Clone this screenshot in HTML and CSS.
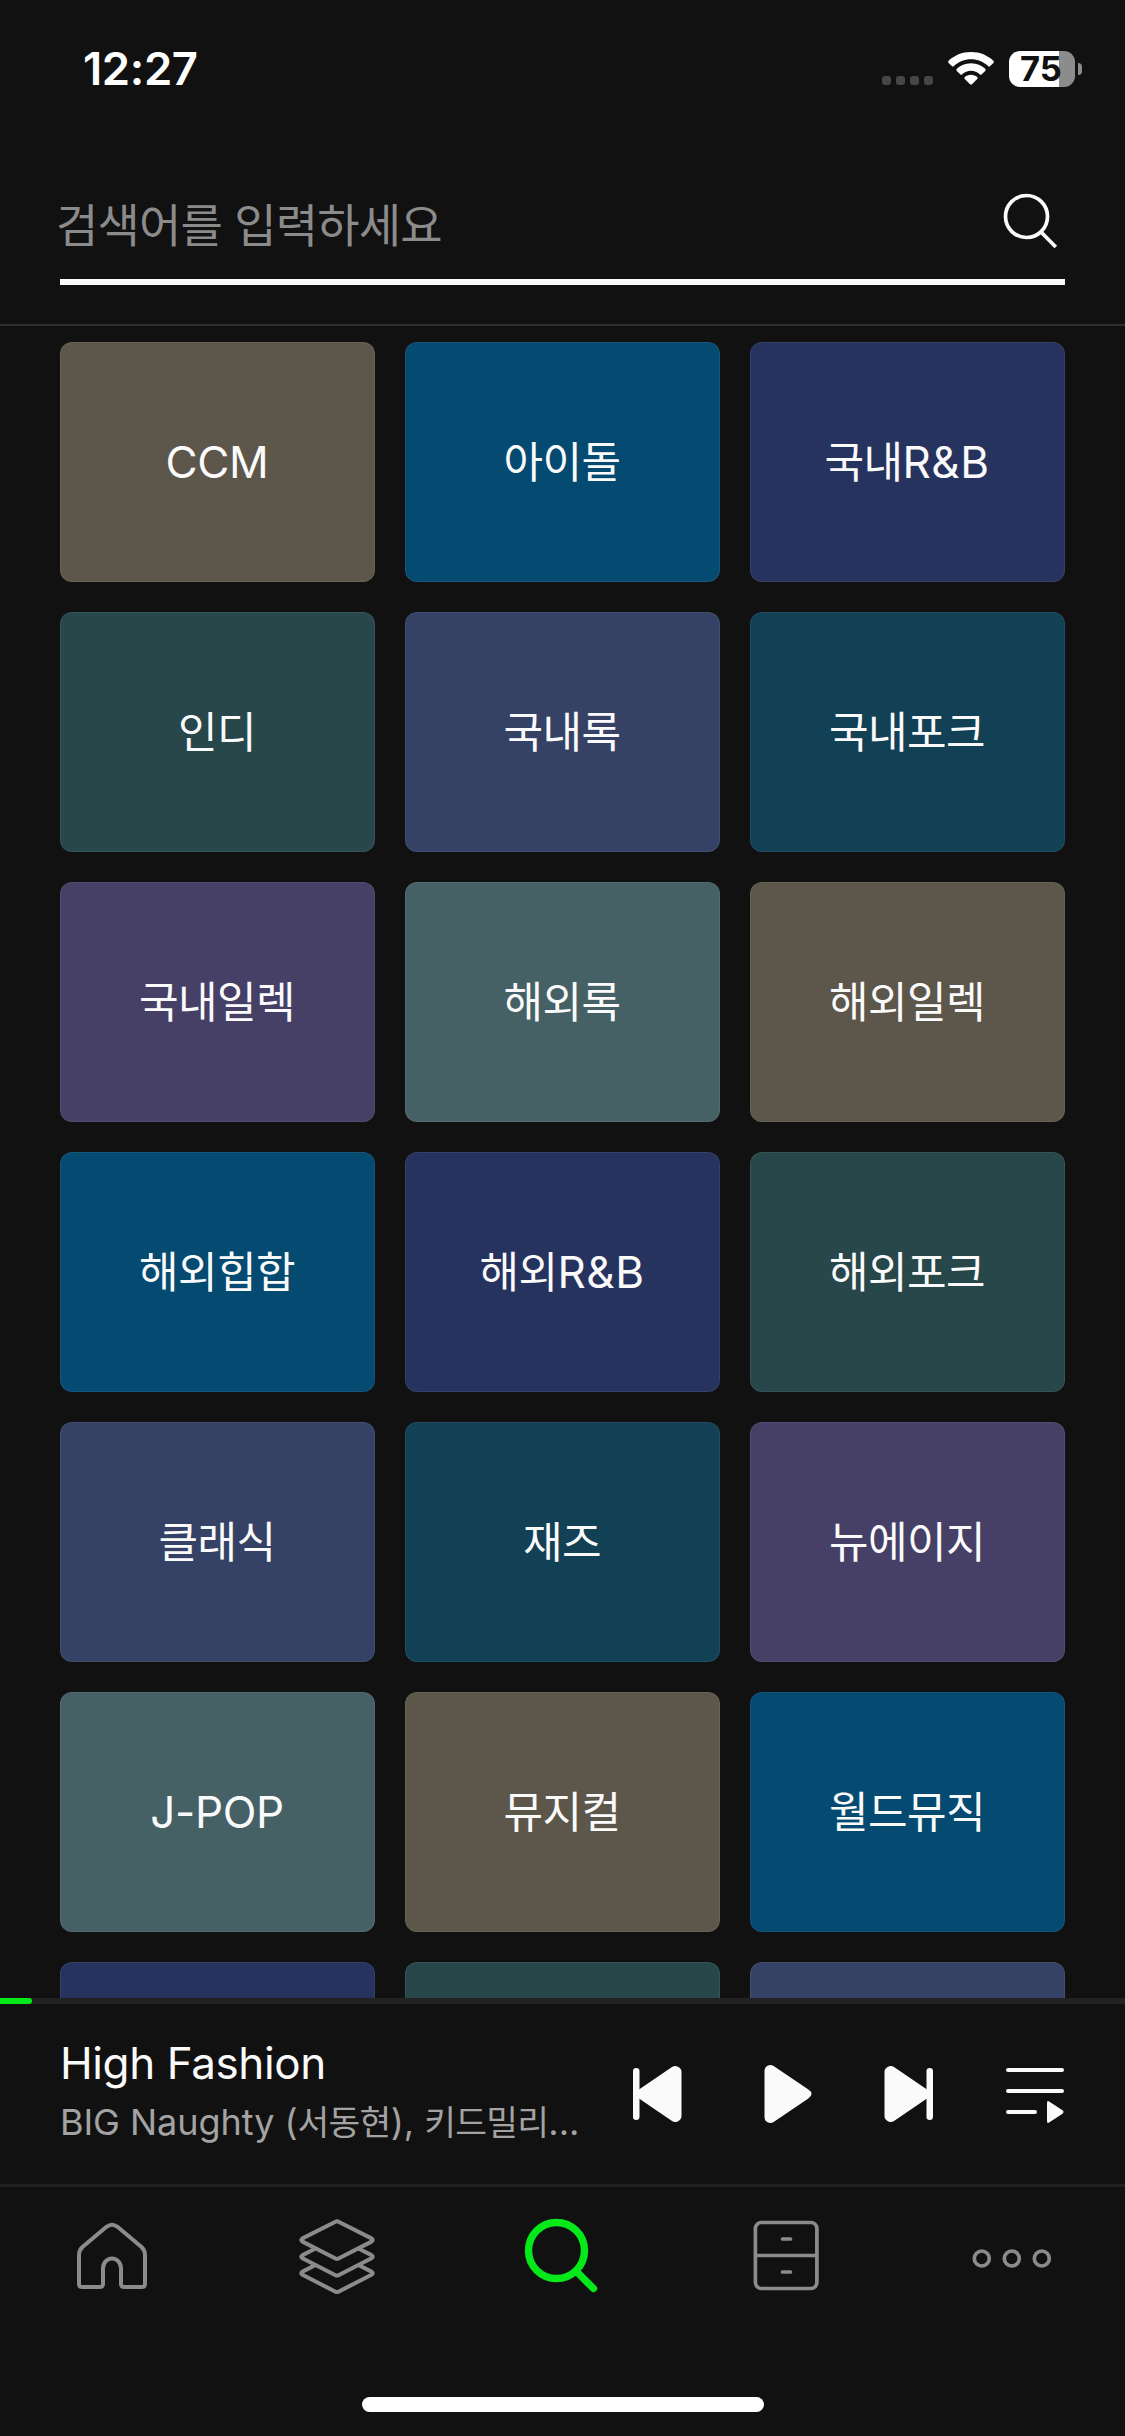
FILE: index.html
```html
<!DOCTYPE html>
<html lang="ko">
<head>
<meta charset="utf-8">
<title>검색</title>
<link rel="stylesheet" href="styles.css">
</head>
<body>
<div class="app">
  <header class="status">
    <span class="time">12:27</span>
    <div class="signals">
      <svg class="cell" width="52" height="9" viewBox="0 0 52 9"><g fill="#464646"><rect width="9" height="9" rx="3"/><rect x="14" width="9" height="9" rx="3"/><rect x="28" width="9" height="9" rx="3"/><rect x="42" width="9" height="9" rx="3"/></g></svg>
      <svg class="wifi" width="46" height="34" viewBox="0 0 46 34"><g fill="#fff"><path d="M23 0C32 0 39.8 3.4 45.4 8.8Q46.4 9.9 45.4 10.9L42.2 14Q41.2 15 40.1 14C35.5 9.8 29.5 7.3 23 7.3S10.500 9.800 5.900 14Q4.800 15 3.800 14L.6 10.900Q-.4 9.900 .6 8.800C6.200 3.400 14 0 23 0Z"/><path d="M23 11.300C28.800 11.300 33.600 13.400 37.200 16.700Q38.200 17.800 37.200 18.900L33.800 22.200Q32.800 23.200 31.700 22.200C29.400 20.100 26.300 18.800 23 18.800S16.600 20.100 14.300 22.200Q13.200 23.200 12.200 22.200L8.800 18.900Q7.800 17.800 8.800 16.700C12.400 13.400 17.200 11.300 23 11.300Z"/><path d="M23 22.800C25.500 22.800 27.500 23.700 29.200 25.100Q30.200 26.100 29.200 27.100L24 32.300Q23 33.200 22 32.300L16.800 27.100Q15.800 26.100 16.800 25.100C18.500 23.700 20.500 22.800 23 22.800Z"/></g></svg>
      <div class="battery"><span class="level">75</span></div>
      <i class="nub"></i>
    </div>
  </header>

  <div class="search">
    <div class="field">
      <span class="placeholder">검색어를 입력하세요</span>
      <svg class="lens" width="54" height="56" viewBox="0 0 54 56" fill="none" stroke="#fafafa"><circle cx="23.500" cy="23.500" r="21" stroke-width="3.700"/><path d="M38 39L52.800 54" stroke-width="3.700"/></svg>
    </div>
  </div>

  <main class="genres">
    <div class="card taupe"><span class="latin">CCM</span></div>
    <div class="card blue">아이돌</div>
    <div class="card navy">국내<span class="latin rnb">R&amp;B</span></div>
    <div class="card green">인디</div>
    <div class="card slate">국내록</div>
    <div class="card teal">국내포크</div>
    <div class="card purple">국내일렉</div>
    <div class="card sage">해외록</div>
    <div class="card taupe">해외일렉</div>
    <div class="card blue">해외힙합</div>
    <div class="card navy">해외<span class="latin rnb">R&amp;B</span></div>
    <div class="card green">해외포크</div>
    <div class="card slate">클래식</div>
    <div class="card teal">재즈</div>
    <div class="card purple">뉴에이지</div>
    <div class="card sage"><span class="latin">J-POP</span></div>
    <div class="card taupe">뮤지컬</div>
    <div class="card blue">월드뮤직</div>
    <div class="card navy"></div>
    <div class="card green"></div>
    <div class="card slate"></div>
  </main>

  <section class="player">
    <div class="progress"><div class="played"></div></div>
    <div class="now">
      <div class="track">
        <div class="title">High Fashion</div>
        <div class="artist">BIG Naughty (<span class="hangul">서동현</span>), <span class="hangul">키드밀리</span>...</div>
      </div>
      <div class="controls">
        <svg class="prev" width="50" height="60" viewBox="0 0 50 60" fill="#fafafa"><rect x="1" y="4" width="6.500" height="52" rx="3.200"/><path d="M7 25.500L40 3Q43 1 46 2.800Q49.500 4.500 49.500 8V52Q49.500 55.500 46 57.200Q43 59 40 57L7 34.500Z"/></svg>
        <svg class="play" width="50" height="60" viewBox="0 0 50 60" fill="#fafafa"><path d="M1.500 7Q1.500 3 5 1.500Q8 .3 11 2.300L45 25.300Q48.500 27.500 48.500 30T45 34.700L11 57.700Q8 59.700 5 58.500Q1.500 57 1.500 53Z"/></svg>
        <svg class="next" width="50" height="60" viewBox="0 0 50 60" fill="#fafafa"><rect x="42.500" y="4" width="6.500" height="52" rx="3.200"/><path d="M43 25.500L10 3Q7 1 4 2.800Q.5 4.500 .5 8V52Q.5 55.500 4 57.200Q7 59 10 57L43 34.500Z"/></svg>
        <svg class="queue" width="60" height="60" viewBox="0 0 60 60" fill="#fafafa"><rect x="1" y="4" width="58" height="4" rx="2"/><rect x="1" y="25" width="58" height="4" rx="2"/><rect x="1" y="46" width="31" height="4" rx="2"/><path d="M42 39Q42 36 44.500 37.700L57.500 46.300Q59.500 48 57.500 49.700L44.500 58.300Q42 60 42 57Z"/></svg>
      </div>
    </div>
  </section>

  <nav class="tabs">
    <svg width="80" height="80" viewBox="0 0 80 80" fill="none" stroke="#8b8b8b" stroke-width="4"><path d="M34.500 12.800Q40 8.600 45.500 12.800L69.500 33Q73 36.500 73 41V70Q73 73 70 73H52Q49 73 49 70V54.500A9 10 0 0 0 31 54.500V70Q31 73 28 73H10Q7 73 7 70V41Q7 36.500 10.500 33Z"/></svg>
    <svg width="80" height="80" viewBox="0 0 80 80" fill="none" stroke="#8b8b8b" stroke-width="4" stroke-linejoin="round"><path d="M38.500 7.700Q40 6.800 41.500 7.700L74.500 24.400Q77 26 74.500 27.600L41.500 44.500Q40 45.300 38.500 44.500L5.500 27.600Q3 26 5.500 24.400Z"/><path d="M18.500 34.500L5.500 41.100Q3 42.700 5.500 44.300L38.500 61.200Q40 62 41.500 61.200L74.500 44.300Q77 42.700 74.500 41.100L61.500 34.500"/><path d="M18.500 51L5.500 57.600Q3 59.200 5.500 60.800L38.500 77.700Q40 78.500 41.500 77.700L74.500 60.800Q77 59.200 74.500 57.600L61.500 51"/></svg>
    <svg width="80" height="80" viewBox="0 0 80 80" fill="none" stroke="#05e81a" stroke-width="7.400" stroke-linecap="round"><circle cx="34.500" cy="36.500" r="28"/><path d="M55 58L71.500 74.500"/></svg>
    <svg width="80" height="80" viewBox="0 0 80 80" fill="none" stroke="#8b8b8b" stroke-width="3.700"><rect x="8.400" y="8.500" width="61.500" height="66" rx="6"/><path d="M8.400 41.500H69.900"/><path d="M35.500 25H43.500M35.500 58H43.500" stroke-linecap="round"/></svg>
    <svg width="80" height="80" viewBox="0 0 80 80" fill="none" stroke="#8b8b8b" stroke-width="3.700"><circle cx="9.800" cy="44.500" r="7.500"/><circle cx="39.800" cy="44.500" r="7.500"/><circle cx="69.800" cy="44.500" r="7.500"/></svg>
  </nav>
  <div class="home-bar"></div>
</div>
</body>
</html>
```
FILE: styles.css
```css
* { box-sizing: border-box; }
body {
  margin: 0;
  background: #111;
  color: #fafafa;
  font-family: Inter, "Noto Sans CJK KR", sans-serif;
}
svg { display: block; flex: none; overflow: visible; }
.app {
  display: flex;
  flex-direction: column;
  width: 1125px;
  height: 2436px;
  overflow: hidden;
}

.status {
  display: flex;
  justify-content: space-between;
  align-items: flex-start;
  height: 132px;
  padding: 51px 43px 0 83px;
}
.time {
  font-size: 45.5px;
  font-weight: 600;
  line-height: 36px;
  letter-spacing: -0.4px;
  color: #fff;
}
.signals { display: flex; align-items: flex-start; }
.cell { margin: 25px 14px 0 0; }
.wifi { margin: 1px 15px 0 0; }
.battery {
  width: 66px;
  height: 36px;
  padding-right: 2px;
  border-radius: 11px;
  background: linear-gradient(90deg, #fff 50px, #8c8c8c 50px);
  color: #111;
  text-align: center;
}
.level {
  display: block;
  font-size: 34.5px;
  font-weight: 700;
  line-height: 36px;
}
.nub {
  width: 4px;
  height: 12px;
  margin: 12px 0 0 3px;
  border-radius: 0 4px 4px 0;
  background: #8c8c8c;
}

.search {
  height: 194px;
  padding: 48px 60px 0;
  border-bottom: 2px solid #2f2f2f;
}
.field {
  display: flex;
  justify-content: space-between;
  align-items: flex-start;
  height: 105px;
  padding: 13px 8px 0 0;
  border-bottom: 6px solid #fafafa;
}
.placeholder {
  margin: 5px 0 0 -4px;
  font-size: 46px;
  line-height: 54px;
  letter-spacing: -0.8px;
  color: #8b8b8b;
}

.genres {
  display: grid;
  grid-template-columns: repeat(3, 315px);
  grid-auto-rows: 240px;
  gap: 30px;
  height: 1672px;
  padding: 16px 60px 0;
  overflow: hidden;
}
.card {
  display: flex;
  align-items: center;
  justify-content: center;
  padding: 0 1px 1px 0;
  border: 1px solid rgba(255, 255, 255, 0.07);
  border-radius: 12px;
  font-size: 43px;
  line-height: 60px;
  letter-spacing: -0.6px;
}
.latin { font-size: 44px; letter-spacing: -0.3px; }
.rnb { letter-spacing: 0.5px; }
.taupe { background-color: #5d564a; }
.blue { background-color: #054a70; }
.navy { background-color: #27335f; }
.green { background-color: #27474b; }
.slate { background-color: #364265; }
.teal { background-color: #124054; }
.purple { background-color: #463f66; }
.sage { background-color: #466166; }

.player { height: 189px; border-bottom: 3px solid #202020; }
.progress { height: 6px; background: #222; }
.played {
  width: 32px;
  height: 6px;
  border-radius: 0 3px 3px 0;
  background: #05e81a;
}
.now {
  display: flex;
  justify-content: space-between;
  padding: 29px 60px 0;
}
.title {
  font-size: 44px;
  line-height: 60px;
  letter-spacing: -0.4px;
  white-space: nowrap;
}
.artist {
  padding-top: 2px;
  font-size: 36px;
  line-height: 54px;
  letter-spacing: -0.05px;
  white-space: nowrap;
  color: #a3a3a3;
}
.hangul { font-size: 34.5px; letter-spacing: -0.7px; }
.controls {
  display: flex;
  width: 433px;
  padding-top: 31px;
}
.play { margin-left: 81px; }
.next { margin-left: 71px; }
.queue { margin-left: 71px; }

.tabs {
  display: grid;
  grid-template-columns: repeat(5, 225px);
  justify-items: center;
  height: 210px;
  padding-top: 27px;
}
.tabs svg { margin-right: 1px; }
.home-bar {
  align-self: center;
  width: 402px;
  height: 15px;
  border-radius: 8px;
  background: #fff;
}
```
